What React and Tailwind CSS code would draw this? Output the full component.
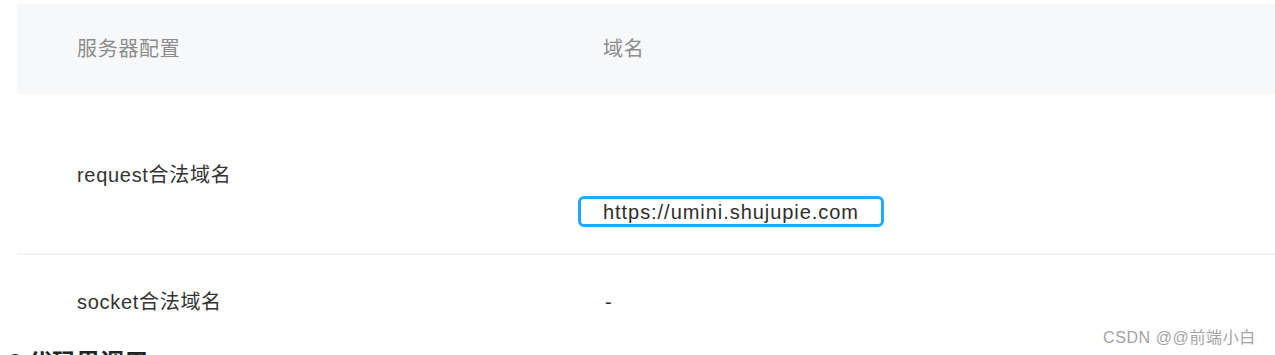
import React from 'react';

const FONT = { fontFamily: '"Liberation Sans", "Noto Sans CJK SC", sans-serif' };

const ROWS = [
  { label: 'request合法域名', domain: 'https://umini.shujupie.com' },
  { label: 'socket合法域名', domain: '-' },
];

function DomainBox({ value }) {
  return (
    <div className="ml-[-25px] flex h-[31px] w-[306px] items-center rounded-[6px] border-[3px] border-[#22a7ff] pl-[22px] text-[20px] tracking-[0.95px] text-[#2e2e2e]">
      {value}
    </div>
  );
}

export default function App() {
  return (
    <div className="relative h-[355px] w-[1275px] overflow-hidden bg-white" style={FONT}>
      <div className="ml-[17px] mt-[4px] tracking-[0.7px]">
        {/* table head */}
        <div className="flex h-[90px] items-center bg-[#f7f8fa] text-[20px] leading-[28px] text-[#8c8c8c]">
          <div className="w-[586px] pl-[60px]">服务器配置</div>
          <div>域名</div>
        </div>

        {/* request row */}
        <div className="flex h-[161px] border-b-2 border-[#f3f3f3] text-[20px] leading-[28px] text-[#333]">
          <div className="w-[586px] pl-[60px] pt-[67px]">{ROWS[0].label}</div>
          <div className="pt-[102px]">
            <DomainBox value={ROWS[0].domain} />
          </div>
        </div>

        {/* socket row */}
        <div className="flex h-[92px] text-[20px] leading-[28px] text-[#333]">
          <div className="w-[586px] pl-[60px] pt-[33px]">{ROWS[1].label}</div>
          <div className="pl-[2px] pt-[33px]">{ROWS[1].domain}</div>
        </div>
      </div>

      <h2 className="pl-[8px] text-[24px] font-bold leading-[32px] text-[#222]">6.代码里调用</h2>

      <span className="absolute left-[1103px] top-[328px] text-[16px] leading-[20px] tracking-[0.6px] text-[#a3a3a3]">
        CSDN @@前端小白
      </span>
    </div>
  );
}
